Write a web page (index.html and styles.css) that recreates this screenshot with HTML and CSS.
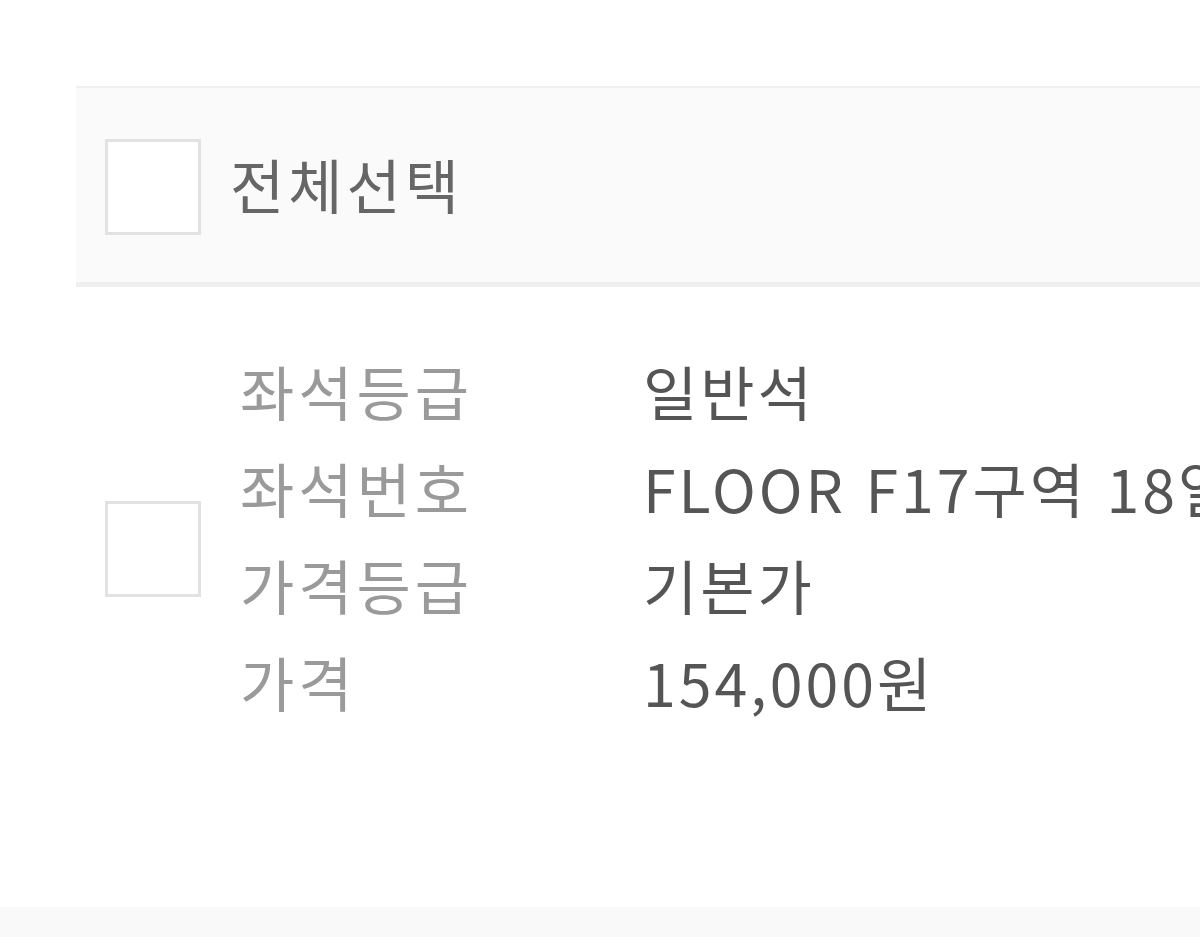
FILE: index.html
```html
<!DOCTYPE html>
<html lang="ko">
    <head>
        <meta charset="utf-8">
        <title>좌석 선택</title>
        <meta name="viewport" content="width=device-width, initial-scale=1.0">
        <link rel="stylesheet" href="styles.css">
    </head>
    <body>
        <div class="select-all">
            <span class="check"></span>
            <span class="select-all-label">전체선택</span>
        </div>
        <div class="seat">
            <span class="check check-row"></span>
            <dl class="seat-info">
                <dt>좌석등급</dt><dd>일반석</dd>
                <dt>좌석번호</dt><dd>FLOOR F17구역 18열</dd>
                <dt>가격등급</dt><dd>기본가</dd>
                <dt>가격</dt><dd>154,000원</dd>
            </dl>
        </div>
        <div class="footer-band"></div>
    </body>
</html>
```

FILE: styles.css
```css
body{margin:0; background:#fff; font-family:"Noto Sans CJK KR","Noto Sans",sans-serif; overflow:hidden; height:937px; position:relative}
.check{display:block; flex:none; width:90px; height:90px; border:3px solid #e2e2e2; background:#fff}
.check-row{margin-top:26px}
.select-all{margin:86px 0 0 76px; height:194px; border-top:2px solid #efefef; border-bottom:5px solid #efefef; background:#fafafa; display:flex; align-items:center; padding-left:29px; gap:29px}
.select-all .check{margin-top:4px}
.select-all-label{font-size:59px; color:#666; letter-spacing:4px; line-height:1; margin-top:-4px}
.seat{display:flex; align-items:center; padding-left:105px; margin-top:55px; gap:39px}
.seat-info{display:grid; grid-template-columns:403px auto; margin:0; font-size:59px; line-height:97px; white-space:nowrap; letter-spacing:4px}
.seat-info dt{color:#9a9a9a}
.seat-info dd{margin:0; color:#555; letter-spacing:3px}
.footer-band{position:absolute; left:0; right:0; bottom:0; height:30px; background:#f9f9f9}
```
